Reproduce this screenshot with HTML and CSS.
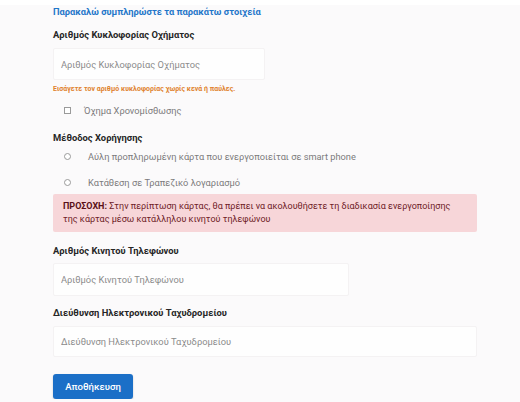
FILE: index.html
```html
<!DOCTYPE html>
<html>
	<head>
		<meta charset="utf-8">
		<link rel="stylesheet" href="styles.css">
	</head>
	<body>
		<div class="topbar"></div>
		<form class="forma">
			<h2 class="titlu">Παρακαλώ συμπληρώστε τα παρακάτω στοιχεία</h2>

			<label class="eticheta">Αριθμός Κυκλοφορίας Οχήματος</label>
			<input class="camp camp-scurt" type="text" placeholder="Αριθμός Κυκλοφορίας Οχήματος">
			<div class="indiciu">Εισάγετε τον αριθμό κυκλοφορίας χωρίς κενά ή παύλες.</div>

			<label class="optiune optiune-check">
				<input class="bifa" type="checkbox">
				<span>Όχημα Χρονομίσθωσης</span>
			</label>

			<label class="eticheta eticheta-metoda">Μέθοδος Χορήγησης</label>
			<label class="optiune">
				<input class="radio" type="radio" name="metoda">
				<span>Αύλη προπληρωμένη κάρτα που ενεργοποιείται σε smart phone</span>
			</label>
			<label class="optiune optiune-doi">
				<input class="radio" type="radio" name="metoda">
				<span>Κατάθεση σε Τραπεζικό λογαριασμό</span>
			</label>

			<div class="alerta">
				<b>ΠΡΟΣΟΧΗ:</b> Στην περίπτωση κάρτας, θα πρέπει να ακολουθήσετε τη διαδικασία ενεργοποίησης της κάρτας μέσω κατάλληλου κινητού τηλεφώνου
			</div>

			<label class="eticheta eticheta-tel">Αριθμός Κινητού Τηλεφώνου</label>
			<input class="camp camp-mediu" type="text" placeholder="Αριθμός Κινητού Τηλεφώνου">

			<label class="eticheta eticheta-mail">Διεύθυνση Ηλεκτρονικού Ταχυδρομείου</label>
			<input class="camp camp-lung" type="text" placeholder="Διεύθυνση Ηλεκτρονικού Ταχυδρομείου">

			<button class="salveaza" type="button">Αποθήκευση</button>
		</form>
	</body>
</html>
```

FILE: styles.css
```css
body{
	margin: 0;
	background-color: #fbfafb;
	font-family: Roboto, "Noto Sans", sans-serif;
	color: #222;
}
.topbar{
	height: 5px;
	background-color: #fff;
}
.forma{
	display: flex;
	flex-direction: column;
	align-items: flex-start;
	width: 424px;
	padding: 1px 0 0 53px;
}
.titlu{
	margin: 0;
	font-size: 9.3px;
	line-height: 12px;
	font-weight: 700;
	color: #1f76c9;
}
.eticheta{
	display: block;
	margin-top: 11px;
	font-size: 9.4px;
	line-height: 12px;
	font-weight: 700;
	color: #262626;
}
.eticheta-metoda{
	margin-top: 15px;
}
.eticheta-tel{
	margin-top: 13px;
}
.camp{
	box-sizing: border-box;
	margin: 7px 0 0 0;
	height: 32px;
	padding: 0 7px;
	border: 1px solid #f4f2f3;
	border-radius: 2px;
	background-color: #fefefe;
	font-family: inherit;
	font-size: 9.3px;
	color: #333;
	outline: none;
}
.camp::placeholder{
	color: #8b8b8b;
}
.camp-scurt{
	width: 212px;
}
.camp-mediu{
	width: 296px;
	height: 33px;
	margin-top: 6px;
}
.camp-lung{
	width: 424px;
	height: 31px;
}
.indiciu{
	margin-top: 5px;
	font-size: 7px;
	line-height: 8px;
	font-weight: 700;
	color: #e0822e;
}
.optiune{
	display: flex;
	align-items: center;
	height: 14px;
	margin-top: 5px;
	padding-left: 11px;
	font-size: 9.25px;
	color: #7b7b7b;
}
.optiune-check{
	margin-top: 10px;
}
.optiune-doi{
	margin-top: 12px;
}
.bifa, .radio{
	appearance: none;
	box-sizing: border-box;
	width: 7px;
	height: 7px;
	margin: 0 13px 0 0;
	border: 1px solid #9a9a9a;
	background-color: #fff;
}
.radio{
	border-radius: 50%;
	margin-right: 17px;
}
.alerta{
	box-sizing: border-box;
	width: 424px;
	margin-top: 5px;
	padding: 6px 14px 6px 10px;
	border-radius: 2px;
	background-color: #f7d6d9;
	color: #6e2026;
	font-size: 9px;
	line-height: 13px;
}
.alerta b{
	color: #5a1118;
}
.salveaza{
	margin-top: 17px;
	width: 80px;
	height: 25px;
	border: none;
	border-radius: 3px;
	background-color: #1b6fc7;
	color: #fff;
	font-family: inherit;
	font-size: 9.6px;
	font-weight: 500;
	box-shadow: 0 1px 2px rgba(0,0,0,0.2);
}
```
